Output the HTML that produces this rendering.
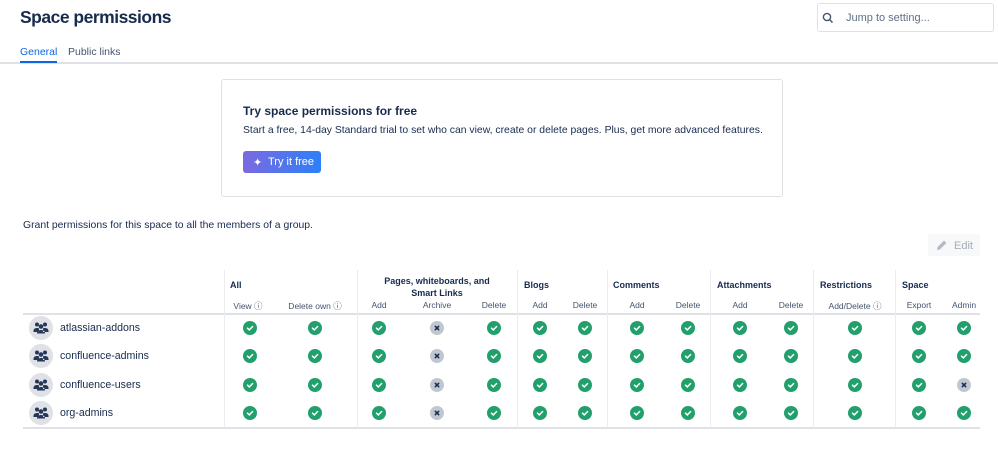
<!DOCTYPE html>
<html><head><meta charset="utf-8"><style>
*{box-sizing:border-box;margin:0;padding:0}
body{width:998px;height:450px;background:#fff;font-family:"Liberation Sans",sans-serif;color:#172b4d;position:relative;overflow:hidden}
.a{position:absolute;white-space:nowrap}
.ok,.no{position:absolute;width:14px;height:14px;border-radius:50%;transform:translate(-7px,-7px)}
.ok{background:#22a06b}
.no{background:#c1c7d0}
.ok svg,.no svg{position:absolute;left:0;top:0}
.vl{position:absolute;top:270px;height:158px;width:1px;background:#ebecf0}
.gh{position:absolute;top:280px;font-size:9px;font-weight:bold;color:#172b4d}
.sh{position:absolute;top:300px;font-size:8.5px;color:#44546f;transform:translateX(-50%);white-space:nowrap}
.av{position:absolute;left:29px;width:24px;height:24px;border-radius:50%;background:#dfe1e6}
.nm{position:absolute;left:60px;font-size:10.6px;color:#172b4d}
</style></head><body>
<div class="a" style="left:20px;top:7px;font-size:17.5px;font-weight:bold;letter-spacing:-0.5px">Space permissions</div>
<div class="a" style="left:20px;top:46px;font-size:10.5px;color:#0c66e4">General</div>
<div class="a" style="left:68px;top:46px;font-size:10.5px;color:#44546f">Public links</div>
<div class="a" style="left:0;top:62px;width:998px;height:2px;background:#dfe1e6"></div>
<div class="a" style="left:20px;top:61px;width:37px;height:2px;background:#0c66e4"></div>
<div class="a" style="left:817px;top:3px;width:177px;height:29px;border:1px solid #dfe1e6;border-radius:3px"></div>
<svg class="a" style="left:822px;top:12px" width="12" height="12" viewBox="0 0 12 12"><circle cx="5" cy="5" r="3.6" fill="none" stroke="#44546f" stroke-width="1.4"/><path d="M7.6 7.6L10.5 10.5" stroke="#44546f" stroke-width="1.4"/></svg>
<div class="a" style="left:846px;top:12px;font-size:11px;color:#626f86">Jump to setting...</div>
<div class="a" style="left:221px;top:79px;width:562px;height:118px;border:1px solid #dfe1e6;border-radius:3px"></div>
<div class="a" style="left:243px;top:104px;font-size:12px;font-weight:bold">Try space permissions for free</div>
<div class="a" style="left:243px;top:125px;font-size:10.4px;color:#172b4d">Start a free, 14-day Standard trial to set who can view, create or delete pages. Plus, get more advanced features.</div>
<div class="a" style="left:243px;top:151px;width:78px;height:22px;border-radius:3px;background:linear-gradient(90deg,#7b6ae0,#2d7ff9)"></div>
<div class="a" style="left:253px;top:156px;font-size:11px;color:#fff">✦</div>
<div class="a" style="left:268px;top:156px;font-size:11px;color:#fff;font-weight:500">Try it free</div>
<div class="a" style="left:23px;top:220px;font-size:10.4px">Grant permissions for this space to all the members of a group.</div>
<div class="a" style="left:928px;top:234px;width:52px;height:22px;border-radius:3px;background:#f7f8f9"></div>
<svg class="a" style="left:936px;top:239px" width="12" height="12" viewBox="0 0 12 12"><path d="M1 11l.6-3L8 1.6 10.4 4 4 10.4z" fill="#b3b9c4"/></svg>
<div class="a" style="left:954px;top:240px;font-size:11px;color:#a5adba">Edit</div>
<div class="a" style="left:23px;top:313px;width:957px;height:2px;background:#dfe1e6"></div>
<div class="a" style="left:23px;top:427px;width:957px;height:2px;background:#dfe1e6"></div>
<div class="vl" style="left:224px"></div><div class="vl" style="left:357px"></div><div class="vl" style="left:517px"></div><div class="vl" style="left:607px"></div><div class="vl" style="left:710px"></div><div class="vl" style="left:813px"></div><div class="vl" style="left:895px"></div>
<div class="gh" style="left:230px">All</div>
<div class="gh" style="left:372px;top:275px;width:130px;text-align:center;line-height:12px;white-space:normal">Pages, whiteboards, and Smart Links</div>
<div class="gh" style="left:524px">Blogs</div>
<div class="gh" style="left:613px">Comments</div>
<div class="gh" style="left:717px">Attachments</div>
<div class="gh" style="left:820px">Restrictions</div>
<div class="gh" style="left:902px">Space</div>
<div class="sh" style="left:248px">View ⓘ</div>
<div class="sh" style="left:315px">Delete own ⓘ</div>
<div class="sh" style="left:379px">Add</div>
<div class="sh" style="left:437px">Archive</div>
<div class="sh" style="left:494px">Delete</div>
<div class="sh" style="left:540px">Add</div>
<div class="sh" style="left:585px">Delete</div>
<div class="sh" style="left:637px">Add</div>
<div class="sh" style="left:688px">Delete</div>
<div class="sh" style="left:740px">Add</div>
<div class="sh" style="left:791px">Delete</div>
<div class="sh" style="left:855px">Add/Delete ⓘ</div>
<div class="sh" style="left:919px">Export</div>
<div class="sh" style="left:964px">Admin</div>
<div id="rows"></div>
<script>
var names=["atlassian-addons","confluence-admins","confluence-users","org-admins"];
var ys=[328,356,385,413];
var xs=[250,315,379,437,494,540,585,637,688,740,791,855,919,964];
var ck='<svg width="14" height="14" viewBox="0 0 14 14"><path d="M4.5 7.2l1.8 1.7 3.3-3.4" fill="none" stroke="#fff" stroke-width="1.5" stroke-linecap="round"/></svg>';
var xx='<svg width="14" height="14" viewBox="0 0 14 14"><path d="M5.3 5.3l3.4 3.4M8.7 5.3l-3.4 3.4" stroke="#172b4d" stroke-width="1.5" stroke-linecap="round"/></svg>';
var ppl='<svg width="24" height="24" viewBox="0 0 24 24" style="position:absolute;left:0;top:0"><circle cx="8" cy="8.5" r="2" fill="#253858"/><circle cx="16" cy="8.5" r="2" fill="#253858"/><circle cx="12" cy="10.5" r="2.3" fill="#253858"/><path d="M4.5 15c0-2 1.5-3 3.5-3s2 .5 2 .5v3.5H4.5zM19.5 15c0-2-1.5-3-3.5-3s-2 .5-2 .5v3.5h5.5zM8 17.5c0-2.5 2-3.5 4-3.5s4 1 4 3.5z" fill="#253858"/></svg>';
var h='';
for(var r=0;r<4;r++){var y=ys[r];
h+='<div class="av" style="top:'+(y-12)+'px">'+ppl+'</div><div class="nm" style="top:'+(y-6)+'px">'+names[r]+'</div>';
for(var c=0;c<xs.length;c++){var no=(c==3)||(r==2&&c==13);
h+='<div class="'+(no?'no':'ok')+'" style="left:'+xs[c]+'px;top:'+y+'px">'+(no?xx:ck)+'</div>';}}
document.getElementById('rows').innerHTML=h;
</script>
</body></html>
